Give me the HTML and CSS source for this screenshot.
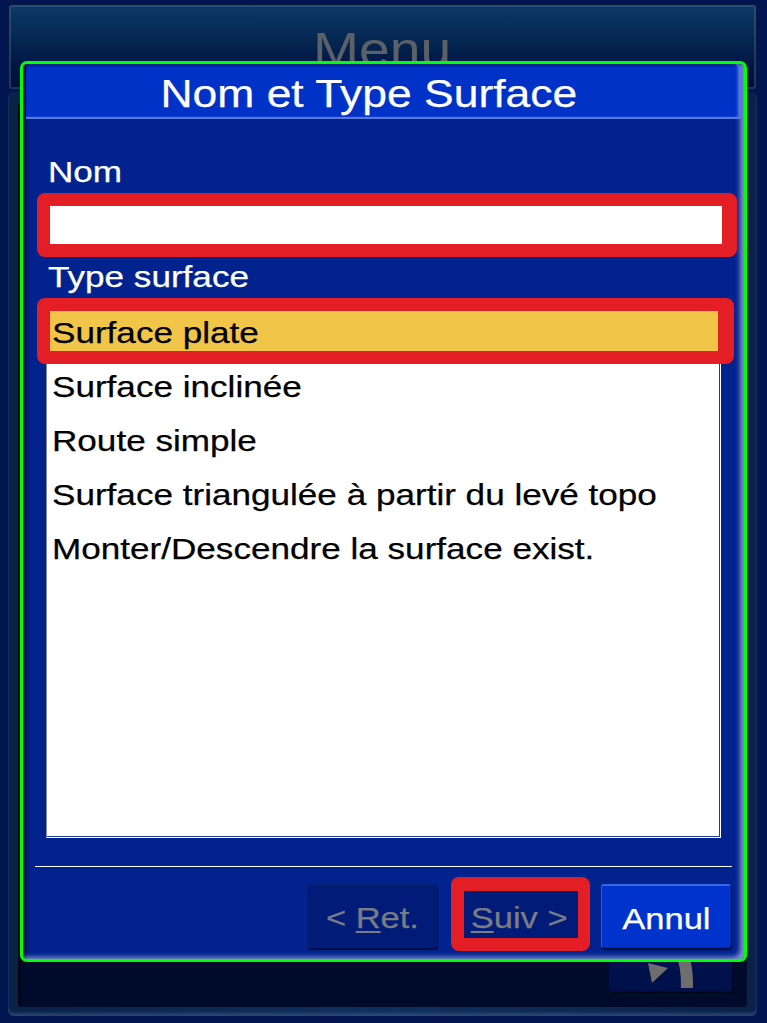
FILE: index.html
```html
<!DOCTYPE html>
<html lang="fr">
<head>
<meta charset="utf-8">
<title>Nom et Type Surface</title>
<link rel="stylesheet" href="styles.css">
</head>
<body>
<div class="screen">
  <div class="menu-panel"><span class="menu-title">Menu</span></div>
  <div class="main-panel">
    <div class="main-inner">
      <div class="corner-btn">
        <svg width="125" height="70" viewBox="0 0 125 70">
          <polygon points="40,41 60,46 44,61" fill="#6e6e6e"/>
          <path d="M 48 10 Q 80 16 79 66" fill="none" stroke="#6e6e6e" stroke-width="12"/>
        </svg>
      </div>
    </div>
  </div>

  <div class="dialog">
    <div class="dlg-title"><span class="wide">Nom et Type Surface</span></div>
    <div class="dlg-body">
      <div class="field-label"><span class="wide">Nom</span></div>
      <div class="text-input"></div>
      <div class="field-label type-label"><span class="wide">Type surface</span></div>
      <ul class="list">
        <li class="item selected"><span class="wide">Surface plate</span></li>
        <li class="item"><span class="wide">Surface inclinée</span></li>
        <li class="item"><span class="wide">Route simple</span></li>
        <li class="item"><span class="wide">Surface triangulée à partir du levé topo</span></li>
        <li class="item"><span class="wide">Monter/Descendre la surface exist.</span></li>
      </ul>
    </div>
    <div class="dlg-footer">
      <div class="separator"></div>
      <div class="buttons">
        <div class="btn disabled"><span class="wide">&lt; <u>R</u>et.</span></div>
        <div class="btn disabled"><span class="wide"><u>S</u>uiv &gt;</span></div>
        <div class="btn primary"><span class="wide">Annul</span></div>
      </div>
    </div>
    <div class="mark mark-name"></div>
    <div class="mark mark-type"></div>
    <div class="mark mark-next"></div>
  </div>
</div>
</body>
</html>
```

FILE: styles.css
```css
* { box-sizing: border-box; }

html, body {
  margin: 0;
  padding: 0;
  background: #021550;
  font-family: "Liberation Sans", Arial, sans-serif;
}

/* the device font is a horizontally wide sans */
.wide {
  display: inline-block;
  transform: scaleX(1.17);
  transform-origin: left center;
  white-space: nowrap;
  -webkit-text-stroke: 0.25px currentColor;
}

.screen {
  position: relative;
  width: 767px;
  height: 1023px;
  padding: 4px 10px 7px 8px;
  display: flex;
  flex-direction: column;
  gap: 2px;
  overflow: hidden;
}

/* ---------- background panels ---------- */
.menu-panel {
  height: 86px;
  flex: none;
  border-radius: 3px;
  border: 1px solid #06163c;
  box-shadow: inset 0 0 0 2px rgba(70, 100, 140, 0.45);
  background: linear-gradient(#0c3a66 0%, #062a55 35%, #001543 75%, #000f38 100%);
  padding-top: 21px;
  text-align: center;
}

.menu-title {
  display: inline-block;
  font-size: 48px;
  line-height: 48px;
  color: #5c6168;
  transform: scaleX(1.15);
}

.main-panel {
  flex: 1;
  border-radius: 6px;
  background: linear-gradient(90deg, #0a2148 0%, #10305c 50%, #0a2148 100%);
  box-shadow: inset 0 -3px 3px rgba(60, 90, 140, 0.6);
  padding: 10px 10px 9px 10px;
  display: flex;
}

.main-inner {
  flex: 1;
  border-radius: 4px;
  background: #000b2c;
  box-shadow: inset 2px 2px 3px rgba(0, 0, 0, 0.7);
  display: flex;
  justify-content: flex-end;
  align-items: flex-end;
  padding: 0 14px 15px 0;
}

.corner-btn {
  width: 125px;
  height: 70px;
  background: #00104a;
  border: 1px solid #000a32;
  border-radius: 3px;
  box-shadow: 1px 1px 1px rgba(0, 0, 0, 0.6);
}

.corner-btn svg { display: block; margin: -1px; }

/* ---------- dialog ---------- */
.dialog {
  position: absolute;
  left: 20px;
  top: 61px;
  width: 727px;
  height: 901px;
  border: 3px solid #00ff00;
  border-radius: 7px;
  background: #02238d;
  box-shadow:
    inset -7px -5px 5px -3px rgba(150, 165, 225, 0.85),
    inset 6px 0 5px -3px rgba(0, 5, 40, 0.75);
  display: flex;
  flex-direction: column;
}

.dlg-title {
  height: 55px;
  flex: none;
  margin: 0 3px 0 3px;
  padding: 6px 30px 0 0;
  background: #0032c8;
  border-bottom: 2px solid #5a78dc;
  border-radius: 4px 4px 0 0;
  box-shadow:
    inset -4px 0 3px -1px rgba(120, 150, 235, 0.8),
    inset 0 2px 2px rgba(0, 10, 80, 0.6);
  color: #ffffff;
  font-size: 39px;
  line-height: 47px;
  text-align: center;
}

.dlg-title .wide {
  transform: scaleX(1.14);
  transform-origin: center center;
}

.dlg-body {
  padding: 36px 23px 0 23px;
  display: flex;
  flex-direction: column;
}

.field-label {
  padding-left: 2px;
  color: #ffffff;
  font-size: 30px;
  line-height: 34px;
}

.text-input {
  margin-top: 12px;
  height: 46px;
  background: #ffffff;
  margin-right: -1px;
}

.type-label { margin-top: 13px; }

.list {
  list-style: none;
  margin: 6px 0 0 0;
  padding: 5px 0 0 0;
  height: 538px;
  background: #ffffff;
  border-left: 1px solid #8a8a8a;
  border-top: 1px solid #8a8a8a;
  border-right: 1px solid #ffffff;
  border-bottom: 1px solid #ffffff;
  box-shadow: inset -1px -1px 0 #1c3ba6;
}

.item {
  height: 54px;
  padding-left: 5px;
  font-size: 30px;
  line-height: 54px;
  color: #000000;
  white-space: nowrap;
}

.item.selected { background: #f1c547; }

.dlg-footer {
  padding: 0 13px 11px 12px;
}

.separator {
  margin-top: 28px;
  height: 1px;
  background: #ffffff;
  margin-right: -1px;
}

.buttons {
  margin-top: 17px;
  display: flex;
  justify-content: flex-end;
  gap: 17px;
}

.btn {
  width: 130px;
  height: 64px;
  padding-top: 4px;
  border-radius: 3px;
  font-size: 30px;
  line-height: 58px;
  text-align: center;
}

.btn .wide {
  transform: scaleX(1.15);
  transform-origin: center center;
}

.btn.disabled {
  background: #011b78;
  color: #7c7c84;
  border: 1px solid #061e6e;
  box-shadow: 1px 2px 1px rgba(0, 8, 50, 0.8);
}

.btn.primary {
  background: #0033cc;
  color: #ffffff;
  border-top: 2px solid #3a66e6;
  border-left: 1px solid #2a58e0;
  border-right: 1px solid #0a2aa0;
  border-bottom: 1px solid #0a2aa0;
  box-shadow: 1px 2px 1px rgba(0, 8, 50, 0.8);
}

.btn u { text-decoration-thickness: 2px; text-underline-offset: 3px; }

/* ---------- red annotation marks ---------- */
.mark {
  position: absolute;
  border: 13px solid #e31e24;
  border-radius: 8px;
}

.mark-name { left: 14px; top: 129px; width: 700px; height: 64px; border-right-width: 15px; }
.mark-type { left: 14px; top: 234px; width: 697px; height: 66px; border-right-width: 16px; }
.mark-next { left: 428px; top: 813px; width: 139px; height: 74px; border-width: 14px 12px 13px 13px; }
```
